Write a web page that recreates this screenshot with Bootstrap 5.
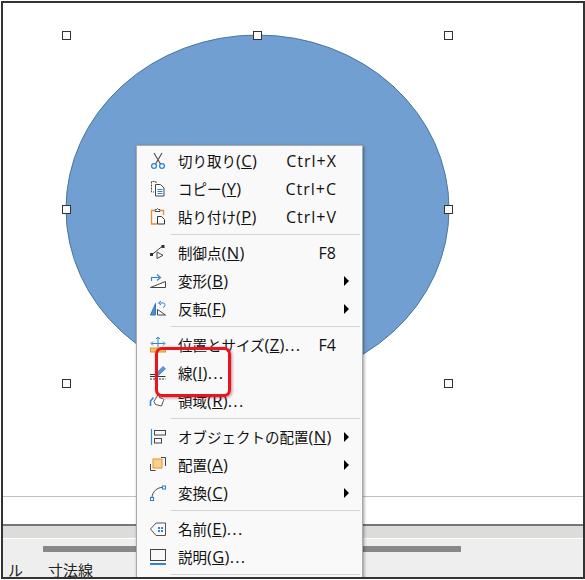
<!DOCTYPE html>
<html lang="ja">
<head>
<meta charset="utf-8">
<title>線</title>
<link href="https://cdn.jsdelivr.net/npm/bootstrap@5.3.0/dist/css/bootstrap.min.css" rel="stylesheet">
<style>
html,body{background:#fff;margin:0;overflow:hidden}
body{font-family:"Open Sans","Noto Sans CJK JP",sans-serif;color:#111}
.shot-frame{width:584px;height:578px;margin:1px 0 0 1px;border:2px solid #333;background:#fff}
.sheet-area{flex:1 1 auto;min-height:0}
.sheet-area svg{display:block}
.tool-band{height:15px;background:#dcdcda;border-top:2px solid #777;border-bottom:1px solid #fff;flex:none}
.tool-panel{height:38px;background:#eee;flex:none}
.h-scroll{height:6px;width:418px;margin-left:40px;margin-top:7px;background:#888}
.panel-tabs{font-family:"Noto Sans CJK JP",sans-serif;font-size:15px;line-height:20px;margin-top:8px;padding-left:5px;color:#222}
.tab-word{margin-right:25px}
.ctx-menu{position:absolute;left:133px;top:142px;width:227px;min-width:0;padding:1px 0 0;margin:0;border:1px solid #aaa;border-radius:0;background:#f9f9f9;box-shadow:1px 1px 3px rgba(0,0,0,.4);display:block;font-size:14.5px}
.ctx-row{height:28px;padding:0 0 0 12px;color:#111;line-height:28px;white-space:nowrap}
.ctx-row svg{width:18px;height:18px;flex:none;margin-right:11px}
.lat-part{font-size:16.5px;letter-spacing:.3px}
.dot-part{font-size:16.5px;letter-spacing:1.2px}
.ctx-label{flex:1 1 auto}
.ctx-key{text-align:right;flex:none;margin-right:26px;font-size:16px}
.ctx-key-wide{letter-spacing:1px;margin-right:25px}
.ctx-arrow{width:0;height:0;border-left:5px solid #000;border-top:5px solid transparent;border-bottom:5px solid transparent;margin-right:13px;flex:none}
.ctx-sep{height:8px;padding-top:3px}
.ctx-sep i{display:block;height:1px;background:#d4d4d4;margin:0 2px 0 34px}
.red-mark{position:absolute;left:152px;top:344px;width:76px;height:50px;border:3px solid #e8141e;border-radius:7px;box-shadow:1px 1px 3px rgba(120,20,30,.5);z-index:1001}
</style>
</head>
<body>
<div class="shot-frame position-relative overflow-hidden d-flex flex-column">
  <div class="sheet-area">
    <svg width="580" height="521" viewBox="3 3 580 521" xmlns="http://www.w3.org/2000/svg">
      <line x1="0" y1="496.5" x2="585" y2="496.5" stroke="#c0c0c0"/>
      <ellipse cx="257.500" cy="209" rx="191.500" ry="174" fill="#729fd2" stroke="#47779f"/>
      <g fill="#fafafa" stroke="#333" stroke-width="1">
        <rect x="62.500" y="31.500" width="8" height="8"/><rect x="253.500" y="31.500" width="8" height="8"/><rect x="444.500" y="31.500" width="8" height="8"/>
        <rect x="62.500" y="205.500" width="8" height="8"/><rect x="444.500" y="205.500" width="8" height="8"/>
        <rect x="62.500" y="379.500" width="8" height="8"/><rect x="444.500" y="379.500" width="8" height="8"/>
      </g>
    </svg>
  </div>
  <div class="tool-band"></div>
  <div class="tool-panel">
    <div class="h-scroll"></div>
    <div class="panel-tabs d-flex"><span class="tab-word">ル</span><span>寸法線</span></div>
  </div>

  <div class="dropdown-menu show ctx-menu">
    <div class="dropdown-item d-flex align-items-center ctx-row">
      <svg viewBox="0 0 18 18" fill="none"><path d="M5 1l6.500 11M13 1L6.500 12" stroke="#555" stroke-width="1.200"/><circle cx="5" cy="14" r="2.400" stroke="#2f86d0" stroke-width="1.300"/><circle cx="13" cy="14" r="2.400" stroke="#2f86d0" stroke-width="1.300"/></svg>
      <span class="ctx-label">切り取り<span class="lat-part">(<u>C</u>)</span></span><span class="ctx-key ctx-key-wide">Ctrl+X</span>
    </div>
    <div class="dropdown-item d-flex align-items-center ctx-row">
      <svg viewBox="0 0 18 18" fill="none"><path d="M7 3V1.500H2.500V12H5" stroke="#444" stroke-dasharray="2 1"/><path d="M6.500 4.500h5l3.500 3.500v8H6.500z" stroke="#444" fill="#fff"/><path d="M8.500 9.500h5M8.500 11.500h5M8.500 13.500h5" stroke="#2f86d0"/></svg>
      <span class="ctx-label">コピー<span class="lat-part">(<u>Y</u>)</span></span><span class="ctx-key ctx-key-wide">Ctrl+C</span>
    </div>
    <div class="dropdown-item d-flex align-items-center ctx-row">
      <svg viewBox="0 0 18 18" fill="none"><path d="M5 2.500H2.500V16H8M12 2.500h2.500V7" stroke="#ee8a2a" stroke-width="1.300"/><path d="M6 3.500V1.500h1.500L8.500 .5l1 1H11v2z" stroke="#444"/><path d="M8.500 8.500h4l3 3V16h-7z" stroke="#333" fill="#fff"/></svg>
      <span class="ctx-label">貼り付け<span class="lat-part">(<u>P</u>)</span></span><span class="ctx-key ctx-key-wide">Ctrl+V</span>
    </div>
    <div class="ctx-sep"><i></i></div>
    <div class="dropdown-item d-flex align-items-center ctx-row">
      <svg viewBox="0 0 18 18" fill="none"><path d="M3 10.500L13 2.500" stroke="#444"/><path d="M8 8v6.500l6-3.200z" stroke="#444" fill="#fff"/><rect x="1" y="9" width="3" height="3" fill="#333"/><rect x="12.500" y="1" width="3" height="3" fill="#333"/></svg>
      <span class="ctx-label">制御点<span class="lat-part">(<u>N</u>)</span></span><span class="ctx-key">F8</span>
    </div>
    <div class="dropdown-item d-flex align-items-center ctx-row">
      <svg viewBox="0 0 18 18" fill="none"><path d="M1.500 15.500L16.500 9.500v6z" stroke="#444" fill="#fff"/><path d="M2.500 9V5.500h8" stroke="#2f86d0" stroke-width="1.200"/><path d="M8 2.500l3.500 3L8 8.500" stroke="#2f86d0" stroke-width="1.200"/></svg>
      <span class="ctx-label">変形<span class="lat-part">(<u>B</u>)</span></span><span class="ctx-arrow"></span>
    </div>
    <div class="dropdown-item d-flex align-items-center ctx-row">
      <svg viewBox="0 0 18 18" fill="none"><path d="M6.500 3.500L1.500 15h5z" fill="#4a8fd0" stroke="#2f78bb"/><path d="M8.500 9.500l8 5.500h-8z" stroke="#444" fill="#fff"/><path d="M10 3h4.500c2 0 2 4-.5 4.500" stroke="#2f86d0"/><path d="M12 1L9.500 3 12 5" stroke="#2f86d0"/></svg>
      <span class="ctx-label">反転<span class="lat-part">(<u>F</u>)</span></span><span class="ctx-arrow"></span>
    </div>
    <div class="ctx-sep"><i></i></div>
    <div class="dropdown-item d-flex align-items-center ctx-row">
      <svg viewBox="0 0 18 18" fill="none"><path d="M9 1v10M2.500 7.500h13M7 3l2-2 2 2M4 5.500l-2 2 2 2M14 5.500l2 2-2 2" stroke="#2f86d0"/><rect x="1.500" y="12" width="15" height="4" fill="#f5c469" stroke="#e2922a"/></svg>
      <span class="ctx-label">位置とサイズ<span class="lat-part">(<u>Z</u>)</span><span class="dot-part">...</span></span><span class="ctx-key">F4</span>
    </div>
    <div class="dropdown-item d-flex align-items-center ctx-row">
      <svg viewBox="0 0 18 18" fill="none"><path d="M7 9.500L14 2.500l2.500 2.200-7 6.800H7z" fill="#5f96d2" stroke="#3f78b8" stroke-width=".7"/><path d="M1 10.500h5.500M1 12.500h15.500" stroke="#333" stroke-width="1.100"/><path d="M1 15h15.500" stroke="#333" stroke-dasharray="2 1"/></svg>
      <span class="ctx-label">線<span class="lat-part">(<u>I</u>)</span><span class="dot-part">...</span></span>
    </div>
    <div class="dropdown-item d-flex align-items-center ctx-row">
      <svg viewBox="0 0 18 18" fill="none"><path d="M1.500 14V9l3-3.500" stroke="#2f86d0" stroke-width="1.600"/><path d="M5 9.500l4-7c1-.8 2 0 2 1l-.5 2 3 1c1 .4 1.500 1 1 2l-2 5.500-6-1.500z" stroke="#555" fill="#fff"/></svg>
      <span class="ctx-label">領域<span class="lat-part">(<u>R</u>)</span><span class="dot-part">...</span></span>
    </div>
    <div class="ctx-sep"><i></i></div>
    <div class="dropdown-item d-flex align-items-center ctx-row">
      <svg viewBox="0 0 18 18" fill="none"><path d="M2.500 1v16" stroke="#2f86d0" stroke-width="1.200"/><rect x="5.500" y="2.500" width="11" height="4.500" stroke="#444"/><rect x="5.500" y="10.500" width="7" height="4.500" stroke="#444"/></svg>
      <span class="ctx-label">オブジェクトの配置<span class="lat-part">(<u>N</u>)</span></span><span class="ctx-arrow"></span>
    </div>
    <div class="dropdown-item d-flex align-items-center ctx-row">
      <svg viewBox="0 0 18 18" fill="none"><path d="M12 1.500h4.500V10M1.500 8v6.500h5" stroke="#444"/><rect x="4" y="3" width="9" height="9" fill="#fbcf8c" stroke="#e8922e"/></svg>
      <span class="ctx-label">配置<span class="lat-part">(<u>A</u>)</span></span><span class="ctx-arrow"></span>
    </div>
    <div class="dropdown-item d-flex align-items-center ctx-row">
      <svg viewBox="0 0 18 18" fill="none"><path d="M3 13C3.500 8 8 3.500 13 3.500" stroke="#444"/><rect x="1.500" y="13.500" width="3" height="3" fill="#fff" stroke="#2a7bc8"/><rect x="13.500" y="2" width="3" height="3" fill="#fff" stroke="#2a7bc8"/></svg>
      <span class="ctx-label">変換<span class="lat-part">(<u>C</u>)</span></span><span class="ctx-arrow"></span>
    </div>
    <div class="ctx-sep"><i></i></div>
    <div class="dropdown-item d-flex align-items-center ctx-row">
      <svg viewBox="0 0 18 18" fill="none"><path d="M16.500 3H7L1.500 9 7 15.500h9.500z" stroke="#555"/><g fill="#2f86d0"><rect x="9" y="7" width="2" height="2"/><rect x="12" y="7" width="2" height="2"/><rect x="9" y="10" width="2" height="2"/><rect x="12" y="10" width="2" height="2"/></g></svg>
      <span class="ctx-label">名前<span class="lat-part">(<u>E</u>)</span><span class="dot-part">...</span></span>
    </div>
    <div class="dropdown-item d-flex align-items-center ctx-row">
      <svg viewBox="0 0 18 18" fill="none"><rect x="1.500" y="1.500" width="15" height="11" stroke="#444"/><rect x="1" y="15" width="16" height="2" fill="#2f86d0"/></svg>
      <span class="ctx-label">説明<span class="lat-part">(<u>G</u>)</span><span class="dot-part">...</span></span>
    </div>
    <div class="ctx-sep"><i></i></div>
  </div>
  <div class="red-mark"></div>
</div>
</body>
</html>
